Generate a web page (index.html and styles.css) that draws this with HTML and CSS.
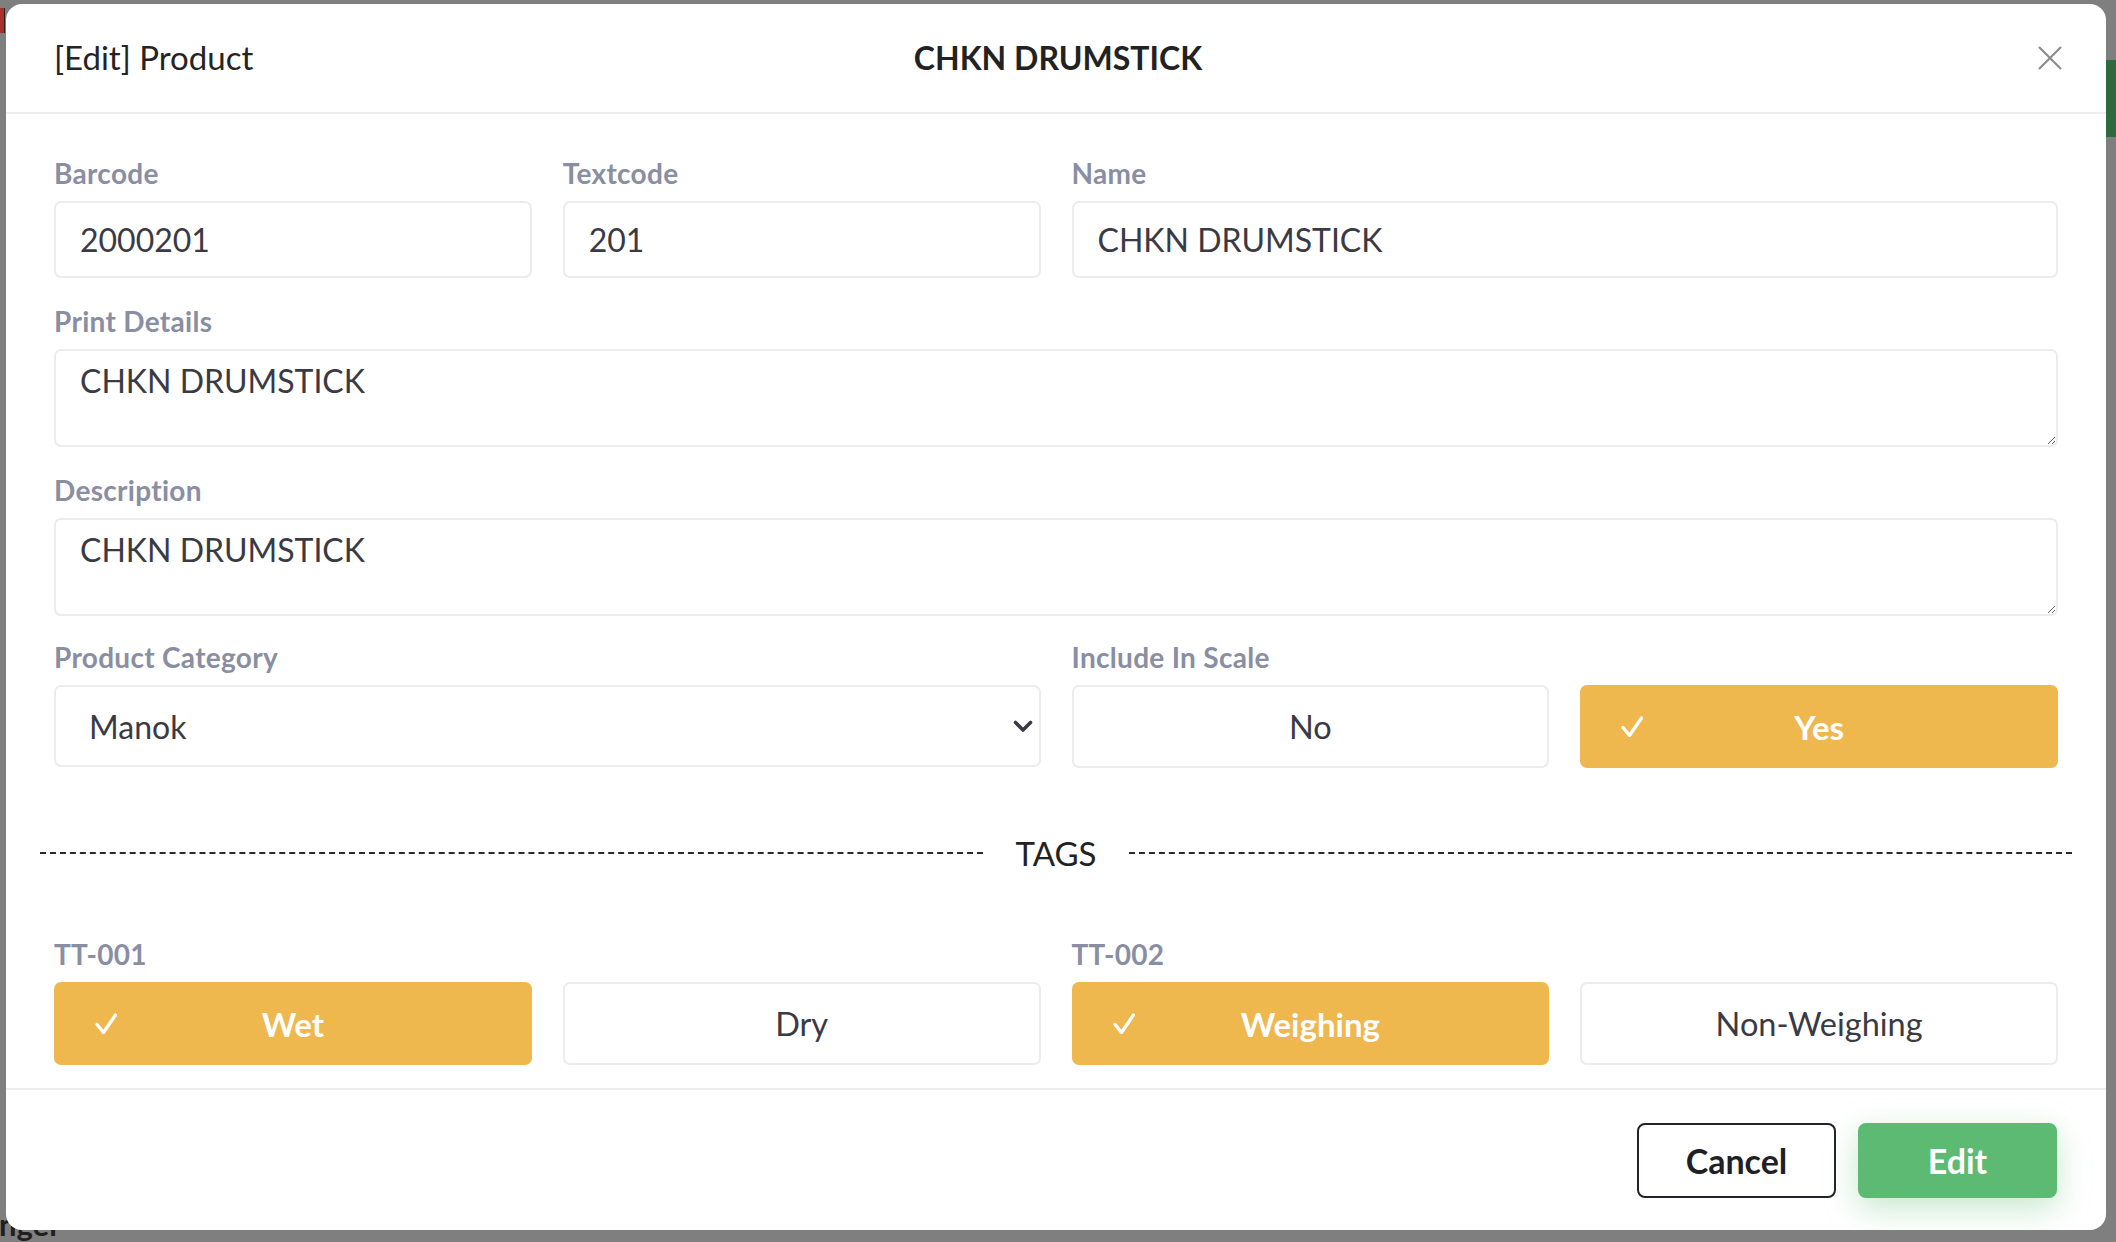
FILE: index.html
```html
<!DOCTYPE html>
<html lang="en">
<head>
<meta charset="utf-8">
<title>[Edit] Product</title>
<link rel="stylesheet" href="styles.css">
</head>
<body>
<div class="backdrop">
  <div class="bg-red"></div>
  <div class="bg-green"></div>
  <div class="bg-text">nger</div>
</div>
<div class="page">
  <div class="modal">
    <header class="modal-header">
      <div class="modal-title">[Edit] Product</div>
      <div class="modal-name">CHKN DRUMSTICK</div>
      <button class="close" type="button" aria-label="Close">
        <svg width="24" height="24" viewBox="0 0 24 24"><path d="M1 1 L23 23 M23 1 L1 23" stroke="#8c8c8c" stroke-width="2.2" fill="none"/></svg>
      </button>
    </header>

    <div class="modal-body">
      <div class="form-grid">
        <div class="field">
          <label class="label">Barcode</label>
          <input class="input" type="text" value="2000201">
        </div>
        <div class="field">
          <label class="label">Textcode</label>
          <input class="input" type="text" value="201">
        </div>
        <div class="field span2">
          <label class="label">Name</label>
          <input class="input" type="text" value="CHKN DRUMSTICK">
        </div>
        <div class="field span4">
          <label class="label">Print Details</label>
          <textarea class="textarea">CHKN DRUMSTICK</textarea>
        </div>
        <div class="field span4">
          <label class="label">Description</label>
          <textarea class="textarea">CHKN DRUMSTICK</textarea>
        </div>
        <div class="field span2 tight">
          <label class="label">Product Category</label>
          <div class="select">
            <span>Manok</span>
            <svg class="chev" width="20" height="14" viewBox="0 0 20 14"><path d="M2.5 2.5 L10 10 L17.5 2.5" stroke="#3a3a44" stroke-width="3.6" fill="none" stroke-linecap="round" stroke-linejoin="round"/></svg>
          </div>
        </div>
        <div class="field span2 tight">
          <label class="label">Include In Scale</label>
          <div class="choices">
            <button class="choice" type="button"><span class="check-slot"></span><span>No</span><span></span></button>
            <button class="choice selected" type="button"><span class="check-slot"><svg width="22" height="21" viewBox="0 0 22 21"><path d="M2 11.5 L8.5 19.5 L20.5 2" stroke="#fff" stroke-width="3.3" fill="none" stroke-linecap="round" stroke-linejoin="round"/></svg></span><span>Yes</span><span></span></button>
          </div>
        </div>
      </div>

      <div class="divider">
        <span class="divider-line"></span>
        <span class="divider-text">TAGS</span>
        <span class="divider-line"></span>
      </div>

      <div class="form-grid">
        <div class="field span2">
          <label class="label">TT-001</label>
          <div class="choices">
            <button class="choice selected" type="button"><span class="check-slot"><svg width="22" height="21" viewBox="0 0 22 21"><path d="M2 11.5 L8.5 19.5 L20.5 2" stroke="#fff" stroke-width="3.3" fill="none" stroke-linecap="round" stroke-linejoin="round"/></svg></span><span>Wet</span><span></span></button>
            <button class="choice" type="button"><span class="check-slot"></span><span>Dry</span><span></span></button>
          </div>
        </div>
        <div class="field span2">
          <label class="label">TT-002</label>
          <div class="choices">
            <button class="choice selected" type="button"><span class="check-slot"><svg width="22" height="21" viewBox="0 0 22 21"><path d="M2 11.5 L8.5 19.5 L20.5 2" stroke="#fff" stroke-width="3.3" fill="none" stroke-linecap="round" stroke-linejoin="round"/></svg></span><span>Weighing</span><span></span></button>
            <button class="choice" type="button"><span class="check-slot"></span><span>Non-Weighing</span><span></span></button>
          </div>
        </div>
      </div>
    </div>

    <footer class="modal-footer">
      <button class="btn btn-cancel" type="button">Cancel</button>
      <button class="btn btn-edit" type="button">Edit</button>
    </footer>
  </div>
</div>
</body>
</html>
```

FILE: styles.css
```css
* { box-sizing: border-box; }

html, body {
  margin: 0;
  padding: 0;
}

body {
  width: 2116px;
  height: 1242px;
  overflow: hidden;
  background: #7f7f7f;
  font-family: "Lato", "Open Sans", sans-serif;
  color: #222;
  position: relative;
}

/* page behind the overlay */
.backdrop {
  position: absolute;
  inset: 0;
  z-index: 0;
}
.bg-red {
  position: absolute;
  left: 0;
  top: 8px;
  width: 5px;
  height: 25px;
  background: #a8312c;
  border-right: 1px solid #222;
}
.bg-green {
  position: absolute;
  right: 0;
  top: 60px;
  width: 12px;
  height: 77px;
  background: #2f6a3e;
}
.bg-text {
  position: absolute;
  left: -1px;
  top: 1204px;
  font-size: 31px;
  font-weight: 700;
  color: #1f1f1f;
  line-height: 40px;
}

.page {
  position: relative;
  z-index: 1;
  padding: 4px 10px 0 6px;
}

.modal {
  width: 2100px;
  height: 1226px;
  background: #fff;
  border-radius: 16px;
  display: flex;
  flex-direction: column;
  overflow: hidden;
}

/* header */
.modal-header {
  height: 110px;
  flex: none;
  border-bottom: 2px solid #efefef;
  display: grid;
  grid-template-columns: 1fr auto 1fr;
  align-items: center;
  padding: 0 44px 0 48px;
}
.modal-title {
  font-size: 33px;
  color: #242424;
  margin-top: -2px;
}
.modal-name {
  font-size: 32px;
  font-weight: 700;
  color: #222;
  margin-top: -2px;
}
.close {
  justify-self: end;
  border: 0;
  background: transparent;
  padding: 0;
  width: 24px;
  height: 24px;
  display: flex;
}

/* body */
.modal-body {
  flex: 1;
  padding: 44px 48px 0;
}

.form-grid {
  display: grid;
  grid-template-columns: repeat(4, 1fr);
  column-gap: 31px;
  row-gap: 28px;
}
.field {
  display: flex;
  flex-direction: column;
  min-width: 0;
}
.field.tight { margin-top: -2px; }
.span2 { grid-column: span 2; }
.span4 { grid-column: span 4; }

.label {
  font-size: 28px;
  line-height: 30px;
  font-weight: 700;
  color: #898ea2;
  letter-spacing: 0.3px;
  margin-bottom: 13px;
}

.input,
.textarea {
  width: 100%;
  font-family: inherit;
  font-size: 32px;
  color: #3a3a44;
  background: #fff;
  border: 2px solid #ececec;
  border-radius: 7px;
  outline: none;
}
.input {
  height: 77px;
  padding: 0 24px;
}
.textarea {
  height: 98px;
  padding: 6px 24px;
  line-height: 48px;
  display: block;
}

.select {
  height: 82px;
  border: 2px solid #ececec;
  border-radius: 7px;
  display: flex;
  align-items: center;
  justify-content: space-between;
  padding: 0 6px 0 33px;
  font-size: 32px;
  color: #3a3a44;
}
.chev { display: block; margin-top: 2px; }

.choices {
  display: grid;
  grid-template-columns: 1fr 1fr;
  column-gap: 31px;
}
.choice {
  height: 83px;
  border: 2px solid #ececec;
  border-radius: 7px;
  background: #fff;
  font-family: inherit;
  font-size: 32.5px;
  color: #3a3a44;
  display: grid;
  grid-template-columns: 1fr auto 1fr;
  align-items: center;
  padding: 0;
}
.check-slot {
  justify-self: start;
  padding-left: 39px;
  display: flex;
}
.choice.selected {
  background: #eeb84f;
  border-color: #eeb84f;
  color: #fff;
  font-weight: 700;
  font-size: 33px;
}

/* tags divider */
.divider {
  display: flex;
  align-items: center;
  gap: 33px;
  margin: 67px -14px 68px;
  height: 36px;
}
.divider-line {
  flex: 1;
  border-top: 2px dashed #2a2a2a;
}
.divider-text {
  font-size: 33px;
  line-height: 36px;
  color: #222;
}

/* footer */
.modal-footer {
  height: 142px;
  flex: none;
  border-top: 2px solid #efefef;
  display: flex;
  justify-content: flex-end;
  align-items: center;
  gap: 22px;
  padding: 0 49px 0 0;
}
.btn {
  width: 199px;
  height: 75px;
  border-radius: 8px;
  font-family: inherit;
  font-size: 34px;
  font-weight: 700;
}
.btn-cancel {
  background: #fff;
  border: 2px solid #23232b;
  color: #1f1f26;
}
.btn-edit {
  background: #5cba72;
  border: 2px solid #5cba72;
  color: #fff;
  box-shadow: 0 10px 32px rgba(92, 186, 114, 0.35);
}
```
